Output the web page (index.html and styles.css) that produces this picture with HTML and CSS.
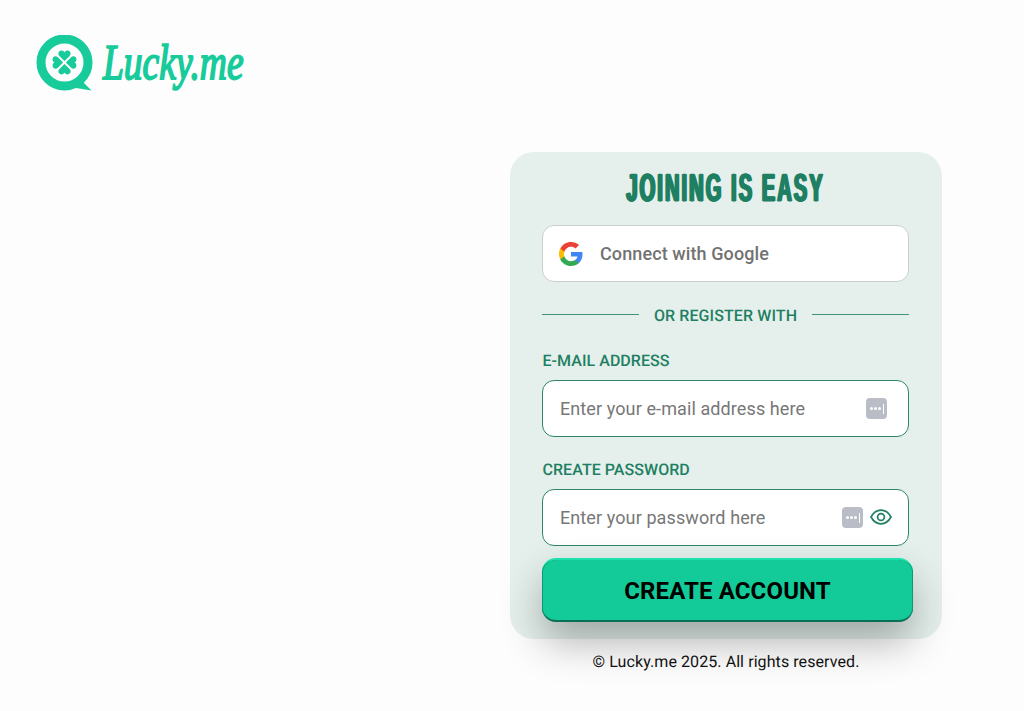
FILE: index.html
```html
<!DOCTYPE html>
<html lang="en">
<head>
<meta charset="utf-8">
<title>Lucky.me</title>
<link rel="stylesheet" href="styles.css">
</head>
<body>
<div class="page">
  <header class="brand">
    <svg class="brand-mark" viewBox="0 0 58 58" width="58" height="58" aria-hidden="true">
      <circle cx="28.500" cy="27.500" r="23.500" fill="none" stroke="#17cb9b" stroke-width="9"/>
      <path d="M44 44 L55.500 55.500 L40 53 Z" fill="#17cb9b"/>
      <g fill="#17cb9b" transform="translate(28.500 27.500) scale(0.92)">
        <path d="M0 -1.500 L-5.600 -7.200 C-8 -10 -6 -13 -3.200 -13 C-1.600 -13 -.5 -12 0 -11 C.5 -12 1.600 -13 3.200 -13 C6 -13 8 -10 5.600 -7.200 Z"/>
        <path d="M0 -1.500 L-5.600 -7.200 C-8 -10 -6 -13 -3.200 -13 C-1.600 -13 -.5 -12 0 -11 C.5 -12 1.600 -13 3.200 -13 C6 -13 8 -10 5.600 -7.200 Z" transform="rotate(90)"/>
        <path d="M0 -1.500 L-5.600 -7.200 C-8 -10 -6 -13 -3.200 -13 C-1.600 -13 -.5 -12 0 -11 C.5 -12 1.600 -13 3.200 -13 C6 -13 8 -10 5.600 -7.200 Z" transform="rotate(180)"/>
        <path d="M0 -1.500 L-5.600 -7.200 C-8 -10 -6 -13 -3.200 -13 C-1.600 -13 -.5 -12 0 -11 C.5 -12 1.600 -13 3.200 -13 C6 -13 8 -10 5.600 -7.200 Z" transform="rotate(270)"/>
      </g>
    </svg>
    <span class="brand-name">Lucky.me</span>
  </header>

  <main class="main">
    <div class="column">
      <form class="card">
        <h1 class="title"><span class="title-text">JOINING IS EASY</span></h1>

        <button type="button" class="google">
          <svg viewBox="0 0 24 24" width="24" height="24" aria-hidden="true">
            <path fill="#4285F4" d="M23.500 12.300c0-.8-.1-1.600-.2-2.300H12v4.500h6.500c-.3 1.500-1.100 2.700-2.400 3.600v3h3.900c2.200-2.100 3.500-5.100 3.500-8.800z"/>
            <path fill="#34A853" d="M12 24c3.200 0 6-1.100 8-2.900l-3.900-3c-1.100.7-2.500 1.200-4.100 1.200-3.100 0-5.800-2.100-6.700-5H1.300v3.100C3.300 21.300 7.300 24 12 24z"/>
            <path fill="#FBBC05" d="M5.300 14.300c-.3-.7-.4-1.500-.4-2.300s.1-1.600.4-2.300V6.600H1.300C.5 8.200 0 10 0 12s.5 3.800 1.300 5.400l4-3.100z"/>
            <path fill="#EA4335" d="M12 4.700c1.800 0 3.300.6 4.600 1.800l3.400-3.400C18 1.200 15.200 0 12 0 7.300 0 3.300 2.700 1.300 6.600l4 3.100c.9-2.900 3.600-5 6.700-5z"/>
          </svg>
          <span>Connect with Google</span>
        </button>

        <div class="divider"><span>OR REGISTER WITH</span></div>

        <label class="label" for="email">E-MAIL ADDRESS</label>
        <div class="field">
          <input class="input" id="email" type="text" placeholder="Enter your e-mail address here">
          <span class="key"><i></i><i></i><i></i><b></b></span>
        </div>

        <label class="label" for="password">CREATE PASSWORD</label>
        <div class="field">
          <input class="input" id="password" type="text" placeholder="Enter your password here">
          <span class="key"><i></i><i></i><i></i><b></b></span>
          <svg class="eye" viewBox="0 0 22 16" width="22" height="16" aria-hidden="true">
            <path d="M1 8 C3.500 3.500 7 1.200 11 1.200 S18.500 3.500 21 8 C18.500 12.500 15 14.800 11 14.800 S3.500 12.500 1 8 Z" fill="none" stroke="#1f7f63" stroke-width="1.700"/>
            <circle cx="11" cy="8" r="3.400" fill="none" stroke="#1f7f63" stroke-width="1.700"/>
          </svg>
        </div>

        <button type="submit" class="submit">CREATE ACCOUNT</button>
      </form>
      <p class="copyright">© Lucky.me 2025. All rights reserved.</p>
    </div>
  </main>
</div>
</body>
</html>
```

FILE: styles.css
```css
* {
  box-sizing: border-box;
}

html,
body {
  margin: 0;
  height: 100%;
  overflow: hidden;
}

body {
  background: #fdfdfd;
  font-family: Roboto, "Liberation Sans", sans-serif;
  color: #111;
  text-rendering: geometricPrecision;
}

.page {
  padding: 35px 0 0 36px;
}

.brand {
  display: flex;
  align-items: flex-start;
  gap: 9px;
  height: 57px;
}

.brand-mark {
  display: block;
  flex: none;
}

.brand-name {
  display: block;
  font-family: "Liberation Serif", serif;
  font-style: italic;
  font-weight: 400;
  font-size: 50px;
  line-height: 54px;
  color: #17cb9b;
  -webkit-text-stroke: 1.9px #17cb9b;
  transform: scaleX(0.75);
  transform-origin: left center;
}

.main {
  display: flex;
  justify-content: flex-end;
  padding-right: 82px;
  margin-top: 60px;
}

.column {
  width: 432px;
  display: flex;
  flex-direction: column;
}

.card {
  display: flex;
  flex-direction: column;
  background: #e5f0ec;
  border-radius: 24px;
  padding: 12px 33px 17px 32px;
}

.title {
  display: flex;
  justify-content: center;
  margin: 0 0 13px;
  padding-top: 1px;
  height: 48px;
  font-family: "Liberation Sans Narrow", "Liberation Sans", sans-serif;
  font-size: 39px;
  line-height: 48px;
  font-weight: 700;
  color: #1f7f63;
  white-space: nowrap;
}

.title-text {
  display: block;
  flex: none;
  letter-spacing: 4px;
  transform: scaleX(0.515);
  -webkit-text-stroke: 1px #1f7f63;
  text-shadow: 2px 0 0 #1f7f63, -2px 0 0 #1f7f63;
}

.google {
  display: flex;
  align-items: center;
  gap: 17px;
  height: 57px;
  padding: 0 16px;
  background: #fff;
  border: 1px solid #c9cfcd;
  border-radius: 12px;
  font-family: inherit;
  font-size: 18px;
  font-weight: 500;
  letter-spacing: 0.1px;
  color: #727272;
}

.divider {
  display: flex;
  align-items: center;
  gap: 15px;
  margin-top: 23px;
  height: 19px;
  font-size: 16px;
  font-weight: 500;
  letter-spacing: 0.1px;
  color: #1f7f63;
  white-space: nowrap;
}

.divider span {
  padding-top: 2px;
}

.divider::before,
.divider::after {
  content: "";
  flex: 1;
  height: 1px;
  background: #3f9379;
}

.label {
  display: block;
  margin-top: 23px;
  margin-bottom: 10px;
  padding-left: 0.5px;
  font-size: 16px;
  line-height: 19px;
  font-weight: 500;
  letter-spacing: 0.05px;
  color: #1f7f63;
}

.divider + .label {
  margin-top: 27px;
}

.field {
  display: flex;
  align-items: center;
  gap: 7px;
  height: 57px;
  padding: 0 16px 0 17px;
  background: #fff;
  border: 1px solid #2f8469;
  border-radius: 12px;
}

.input {
  flex: 1;
  min-width: 0;
  padding: 0;
  border: 0;
  outline: 0;
  background: transparent;
  font-family: inherit;
  font-size: 18px;
  letter-spacing: 0.1px;
  color: #111;
}

.input::placeholder {
  color: #777;
  opacity: 1;
}

.key {
  flex: none;
  display: flex;
  align-items: center;
  justify-content: center;
  gap: 1px;
  width: 21px;
  height: 21px;
  margin-right: 5px;
  border-radius: 4px;
  background: #babdc6;
}

.field:has(.eye) .key {
  margin-right: 0;
}

.key i {
  width: 3px;
  height: 3px;
  border-radius: 50%;
  background: #fff;
}

.key b {
  width: 1px;
  height: 10px;
  margin-left: 1px;
  background: #fff;
}

.eye {
  flex: none;
  margin-top: -1px;
}

.submit {
  flex: none;
  width: 371px;
  height: 64px;
  margin-top: 12px;
  padding: 2px 0 0;
  border: 0;
  border-top: 2px solid #1ee0ab;
  border-bottom: 2px solid #0a6f55;
  border-radius: 14px;
  background: #12cb98;
  box-shadow: inset 1px 0 0 #0c9a74, inset -1px 0 0 #0c9a74, 0 20px 40px rgba(0, 0, 0, 0.3);
  font-family: inherit;
  font-size: 24px;
  font-weight: 700;
  letter-spacing: 0.14px;
  color: #000;
}

.copyright {
  margin: 13px 0 0;
  font-size: 16px;
  line-height: 19px;
  letter-spacing: 0.08px;
  text-align: center;
  color: #111;
}
```
